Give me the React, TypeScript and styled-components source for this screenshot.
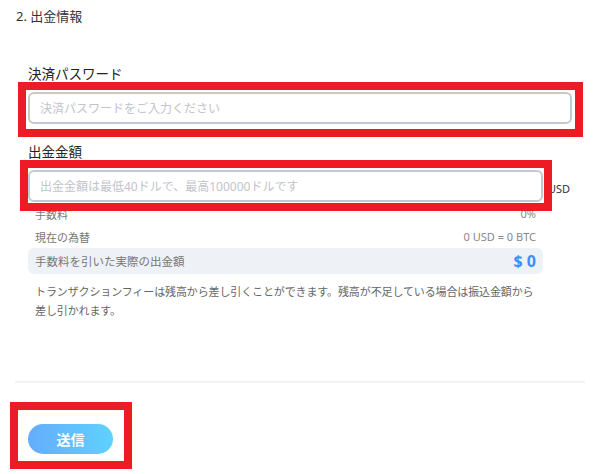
import React from "react";
import styled, { createGlobalStyle } from "styled-components";

const GlobalStyle = createGlobalStyle`
  html, body {
    margin: 0;
    padding: 0;
    background: #ffffff;
  }
  body {
    font-family: "Noto Sans", "Noto Sans CJK JP", sans-serif;
    color: #333;
  }
`;

const RED = "#ed1c24";

const Page = styled.div`
  width: 600px;
  height: 474px;
  box-sizing: border-box;
  padding: 6px 15px 0 15px;
  overflow: hidden;
`;

const SectionTitle = styled.div`
  font-size: 13px;
  line-height: 20px;
  color: #333;
  padding-left: 1px;
`;

const Form = styled.div`
  display: flex;
  flex-direction: column;
  width: 544px;
  margin: 38px 0 0 13px;
`;

const Label = styled.div<{ $top?: number }>`
  font-size: 13.5px;
  line-height: 20px;
  color: #222;
  margin-top: ${(p) => p.$top ?? 0}px;
  margin-bottom: 8px;
`;

type Outset = { t: number; r: number; b: number; l: number };

const Highlight = styled.div<{ $o: Outset; $width?: number }>`
  position: relative;
  width: ${(p) => (p.$width ? `${p.$width}px` : "auto")};
  &::after {
    content: "";
    position: absolute;
    top: -${(p) => p.$o.t}px;
    right: -${(p) => p.$o.r}px;
    bottom: -${(p) => p.$o.b}px;
    left: -${(p) => p.$o.l}px;
    border: 8px solid ${RED};
    pointer-events: none;
  }
`;

const Input = styled.input`
  display: block;
  width: 100%;
  height: 32px;
  box-sizing: border-box;
  border: 2px solid #c3c8d2;
  border-radius: 6px;
  padding: 0 10px;
  font-family: inherit;
  font-size: 12px;
  color: #333;
  background: #fff;
  outline: none;
  &::placeholder {
    color: #c0c4cc;
  }
`;

const AmountRow = styled.div`
  display: flex;
  align-items: center;
`;

const AmountField = styled.div`
  width: 515px;
`;

const Suffix = styled.span`
  font-size: 11px;
  color: #333;
  margin-left: 5px;
  padding-top: 5px;
`;

const InfoRow = styled.div`
  display: flex;
  justify-content: space-between;
  align-items: center;
  width: 515px;
  box-sizing: border-box;
  padding: 0 7px;
  height: 23px;
  font-size: 11px;
  color: #777;
`;

const InfoValue = styled.span`
  color: #888;
`;

const TotalRow = styled(InfoRow)`
  height: 26px;
  background: #eef1f6;
  border-radius: 6px;
  font-size: 11.5px;
  color: #777;
`;

const TotalValue = styled.span`
  font-size: 16px;
  font-weight: 700;
  color: #3d8ef8;
  white-space: pre;
`;

const Note = styled.p`
  width: 515px;
  box-sizing: border-box;
  margin: 8px 0 0;
  padding: 0 7px;
  font-size: 11px;
  line-height: 19px;
  letter-spacing: -0.12px;
  color: #666;
`;

const Divider = styled.hr`
  border: none;
  height: 2px;
  background: #f0f2f6;
  margin: 61px 0 0;
  width: 570px;
`;

const Footer = styled.div`
  padding: 41px 0 0 13px;
`;

const SubmitButton = styled.button`
  width: 85px;
  height: 30px;
  border: none;
  border-radius: 15px;
  background: linear-gradient(90deg, #65acfd 0%, #5fd2fd 100%);
  color: #fff;
  font-family: inherit;
  font-size: 14px;
  font-weight: 700;
  cursor: pointer;
`;

export default function App() {
  return (
    <>
      <GlobalStyle />
      <Page>
        <SectionTitle>2. 出金情報</SectionTitle>
        <Form>
          <Label>決済パスワード</Label>
          <Highlight $o={{ t: 10, r: 11, b: 13, l: 10 }}>
            <Input type="password" placeholder="決済パスワードをご入力ください" />
          </Highlight>

          <Label $top={18}>出金金額</Label>
          <AmountRow>
            <AmountField>
              <Highlight $o={{ t: 10, r: 9, b: 9, l: 8 }}>
                <Input placeholder="出金金額は最低40ドルで、最高100000ドルです" />
              </Highlight>
            </AmountField>
            <Suffix>USD</Suffix>
          </AmountRow>

          <InfoRow>
            <span>手数料</span>
            <InfoValue>0%</InfoValue>
          </InfoRow>
          <InfoRow>
            <span>現在の為替</span>
            <InfoValue>0 USD = 0 BTC</InfoValue>
          </InfoRow>
          <TotalRow>
            <span>手数料を引いた実際の出金額</span>
            <TotalValue>$ 0</TotalValue>
          </TotalRow>
          <Note>
            トランザクションフィーは残高から差し引くことができます。残高が不足している場合は振込金額から差し引かれます。
          </Note>
        </Form>
        <Divider />
        <Footer>
          <Highlight $o={{ t: 22, r: 19, b: 15, l: 18 }} $width={85}>
            <SubmitButton>送信</SubmitButton>
          </Highlight>
        </Footer>
      </Page>
    </>
  );
}
